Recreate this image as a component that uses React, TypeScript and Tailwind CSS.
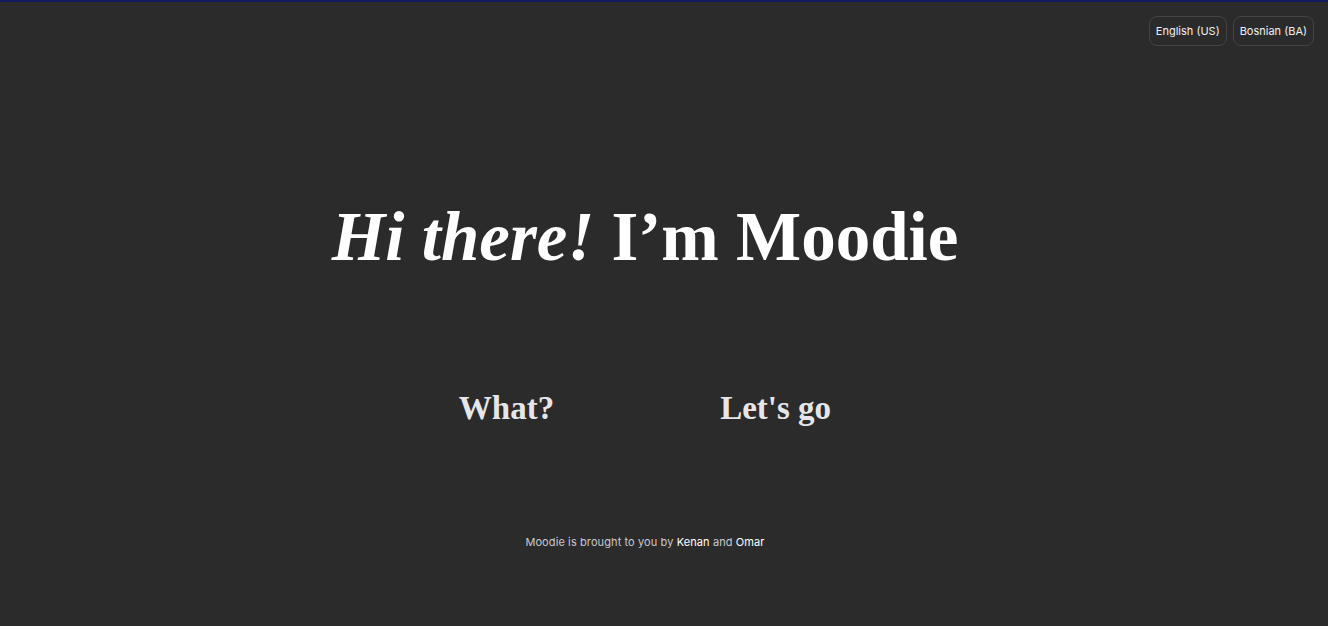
export default function App() {
  const serif = { fontFamily: '"Liberation Serif", "DejaVu Serif", serif' };
  return (
    <div
      className="min-h-[626px] w-full bg-[#2b2b2b] border-t-2 border-[#101a5e] flex flex-col"
      style={{ fontFamily: 'Inter, "Noto Sans", sans-serif' }}
    >
      {/* Language switcher */}
      <div className="flex justify-end gap-[6px] pt-[14px] pr-[14px]">
        <button className="h-[30px] px-[6px] rounded-lg border border-[#444] text-[11px] text-[#f0f0f0]">
          English (US)
        </button>
        <button className="h-[30px] px-[6px] rounded-lg border border-[#444] text-[11px] text-[#f0f0f0]">
          Bosnian (BA)
        </button>
      </div>

      <main className="w-[1290px] flex flex-col items-center">
        <h1
          className="mt-[157px] text-[69px] leading-none text-white font-bold"
          style={serif}
        >
          <span className="italic">Hi there!</span> I’m Moodie
        </h1>

        <div className="mt-[112px] flex gap-[166px] text-[33px] font-bold text-[#e6e6ea]" style={serif}>
          <button>What?</button>
          <button>Let's go</button>
        </div>

        <p className="mt-[100px] text-[11px] tracking-[0.1px] text-[#c9c9d0]">
          Moodie is brought to you by <span className="text-white">Kenan</span> and{" "}
          <span className="text-white">Omar</span>
        </p>
      </main>
    </div>
  );
}
